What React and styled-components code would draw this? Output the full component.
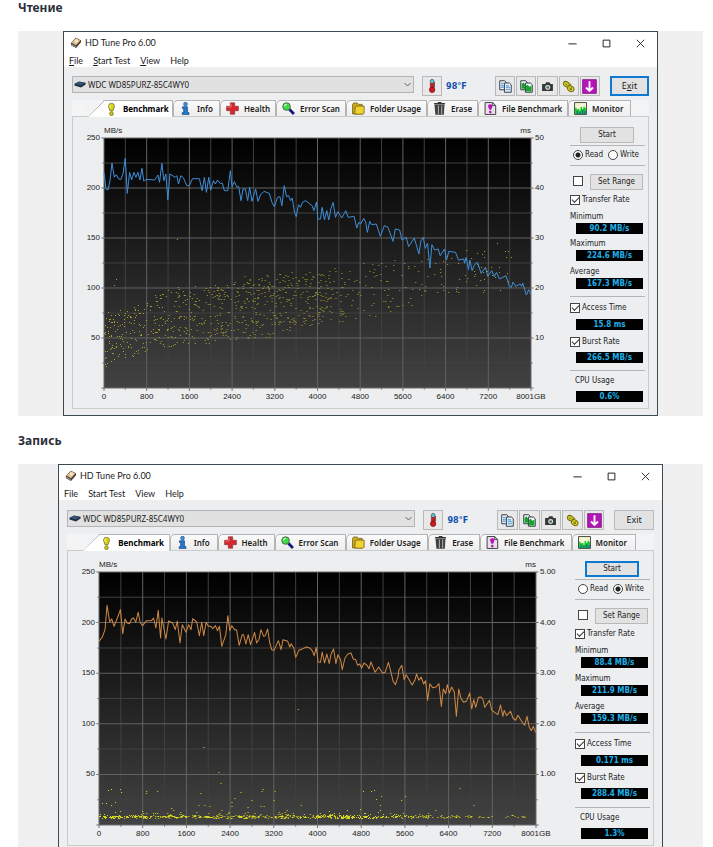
import React, { useId, useState } from 'react';
import styled, { createGlobalStyle, css } from 'styled-components';

const UI_FONT = '"Noto Sans", "Open Sans", sans-serif';
const TITLE_FONT = 'Lato, "Noto Sans", sans-serif';
const PANEL_FONT = '"DejaVu Sans Condensed", "DejaVu Sans", sans-serif';
const AXIS_FONT = '"Liberation Sans", Arial, sans-serif';

const GlobalStyle = createGlobalStyle`
  * {
    box-sizing: border-box;
  }

  html {
    scrollbar-width: none;
  }

  body {
    margin: 0;
    background: #fff;
    font-family: ${UI_FONT};
    color: #1b1b1b;
  }

  button, select, input {
    margin: 0;
    font: inherit;
    color: inherit;
  }
`;

const Article = styled.article`
  padding: 0 10px 0 18px;
`;

const Heading = styled.h2`
  margin: 0 0 15px;
  font-size: 12px;
  line-height: 16px;
  font-weight: 700;
  color: #2b2f3a;
`;

const Figure = styled.figure`
  margin: 0 0 17px;
  padding: 0 ${props => props.$inset}px;
  background: #f0f0f0;
`;

const Window = styled.section`
  border: 1px solid #3c4a54;
  background: #eceef0;
`;

const TitleBar = styled.header`
  display: flex;
  align-items: center;
  height: 22px;
  padding: 0 4px 0 6px;
  background: #fff;
`;

const Title = styled.h3`
  flex: 1;
  margin: 0 0 0 3px;
  font-family: ${TITLE_FONT};
  font-size: 9px;
  line-height: 12px;
  font-weight: 400;
`;

const WindowButton = styled.button`
  display: flex;
  align-items: center;
  justify-content: center;
  width: 26px;
  height: 20px;
  margin-left: 8px;
  padding: 0;
  border: 0;
  background: none;
`;

const Menu = styled.nav`
  display: flex;
  align-items: center;
  gap: 10px;
  height: 13px;
  padding: 0 5px;
  background: #fff;
`;

const MenuLink = styled.a`
  font-family: ${TITLE_FONT};
  font-size: 9px;
  line-height: 13px;
  color: inherit;
  text-decoration: none;
`;

const Content = styled.div`
  padding: ${props => props.$top}px 8px 6px;
`;

const Toolbar = styled.div`
  display: grid;
  grid-template-columns: 350fr 24fr 49fr 115fr 39fr;
  height: 20px;
  margin-bottom: 4px;
`;

const DriveField = styled.label`
  position: relative;
  height: 17px;
  margin-right: 8px;

  svg {
    position: absolute;
    top: 5px;
    left: 2px;
    pointer-events: none;
  }

  svg + svg {
    left: auto;
    right: 3px;
  }
`;

const DriveSelect = styled.select`
  display: block;
  width: 100%;
  height: 17px;
  padding: 0 14px 0 15px;
  border: 1px solid #b4b4b4;
  border-radius: 0;
  background: #e1e1e1;
  font-size: 8px;
  appearance: none;
`;

const buttonFace = css`
  display: flex;
  align-items: center;
  justify-content: center;
  padding: 0;
  border: 1px solid #b9b9b9;
  background: #e2e2e2;
  font-size: 9px;
  line-height: 12px;
`;

const focusFace = css`
  border: 2px solid #0f78d0;
`;

const IconButton = styled.button`
  ${buttonFace}
  height: 20px;
  background: #e8e8e8;
`;

const IconGroup = styled.div`
  display: grid;
  grid-template-columns: repeat(5, 1fr);
  gap: 1px;
  margin-right: 10px;
`;

const Temperature = styled.span`
  font-family: ${PANEL_FONT};
  font-size: 9px;
  line-height: 20px;
  font-weight: 700;
  color: #1250b0;
`;

const ThermoButton = styled(IconButton)`
  margin-right: 4px;
`;

const ExitButton = styled.button`
  ${buttonFace}
  height: 20px;
  ${props => (props.$focused ? focusFace : null)}
`;

const Tabs = styled.div`
  display: grid;
  grid-template-columns:
    minmax(0, 16fr) minmax(0, 85fr) minmax(0, 47fr) minmax(0, 56fr)
    minmax(0, 70fr) minmax(0, 81fr) minmax(0, 51fr) minmax(0, 90fr)
    minmax(0, 63fr) minmax(0, 18fr);
  height: 16px;
  background: #f1f3f4;
`;

const TabStub = styled.span`
  height: 11px;
  margin: 3px 4px 0 0;
  background: #f4f4f4;
`;

const Tab = styled.button`
  display: flex;
  align-items: center;
  gap: 5px;
  padding: 0 0 0 5px;
  border: solid #b4b4b4;
  border-width: 1px 1px 0;
  border-top-left-radius: 5px;
  background: linear-gradient(#fafafa, #ededed);
  font-size: 8px;
  line-height: 12px;
  font-weight: 600;
  white-space: nowrap;
`;

const ActiveTab = styled(Tab)`
  position: relative;
  margin-bottom: -1px;
  padding-left: 17px;
  border-left: 0;
  background: #fff;
  clip-path: polygon(0 100%, 16px 0, 100% 0, 100% 100%);
  font-weight: 700;
  color: #000;

  > svg {
    position: absolute;
    left: 0;
    top: -1px;
  }
`;

const TabIcon = styled.span`
  display: flex;
  justify-content: center;
  flex: 0 0 13px;
`;

const Panel = styled.div`
  display: grid;
  grid-template-columns: minmax(0, 1fr) 75px;
  column-gap: 8px;
  padding-right: 3px;
  border: 1px solid #c9cccd;
`;

const ChartGrid = styled.div`
  display: grid;
  grid-template-columns: 31px minmax(0, 1fr) 31px;
  grid-template-rows: 21px ${props => props.$height}px 20px;
  font-family: ${AXIS_FONT};
  font-size: 8px;
  line-height: 10px;
  color: #222;
`;

const Units = styled.div`
  grid-column: 2;
  display: flex;
  justify-content: space-between;
  align-items: flex-end;
  padding-bottom: 2px;
`;

const AxisLabels = styled.div`
  grid-row: 2;
  grid-column: ${props => (props.$right ? 3 : 1)};
  display: flex;
  flex-direction: column;
  justify-content: space-between;
  margin: -5px 0;
  padding: ${props => (props.$right ? '0 0 0 4px' : '0 4px 0 0')};
  text-align: ${props => (props.$right ? 'left' : 'right')};

  span {
    height: 10px;
  }
`;

const Plot = styled.svg`
  grid-row: 2;
  grid-column: 2;
  display: block;
  width: 100%;
  height: 100%;
  overflow: visible;
`;

const GbLabels = styled.div`
  grid-row: 3;
  grid-column: 2;
  display: flex;
  justify-content: space-between;
  padding-top: 4px;

  span {
    display: flex;
    justify-content: center;
    width: 0;
  }
`;

const Side = styled.form`
  display: flex;
  flex-direction: column;
  justify-content: space-between;
  padding: 10px 0 6px;
  font-family: ${PANEL_FONT};
  font-size: 8px;
  line-height: 10px;
`;

const StartButton = styled.button`
  ${buttonFace}
  width: 54px;
  height: 16px;
  margin: 0 0 2px 10px;
  font-size: 8px;
  ${props => (props.$focused ? focusFace : null)}
`;

const RangeRow = styled.div`
  display: flex;
  justify-content: space-between;
  margin: 8px 0 4px;
  padding: 0 2px 0 3px;

  input {
    margin-top: 2px;
  }
`;

const RangeButton = styled.button`
  ${buttonFace}
  width: 53px;
  height: 16px;
  font-size: 8px;
`;

const Rule = styled.hr`
  width: 100%;
  height: 1px;
  margin: 0;
  border: 0;
  background: #b4b4b4;
`;

const Radios = styled.div`
  display: flex;
  gap: 5px;
  height: 12px;
  margin: 3px 0 4px;
  padding-left: 3px;
`;

const Choice = styled.label`
  display: flex;
  align-items: center;
  gap: 2px;
  height: 12px;
  white-space: nowrap;
`;

const Radio = styled.input`
  width: 10px;
  height: 10px;
  border: 1px solid #444;
  border-radius: 50%;
  background: #fff;
  appearance: none;

  &:checked {
    background: radial-gradient(circle, #222 0 2px, #fff 3px);
  }
`;

const CheckBox = styled.input`
  width: 10px;
  height: 10px;
  border: 1px solid #444;
  background: #fff;
  appearance: none;

  &:checked::after {
    content: '';
    display: block;
    width: 6px;
    height: 3px;
    margin: 1px;
    border: solid #333;
    border-width: 0 0 1px 1px;
    transform: rotate(-45deg);
  }
`;

const ReadingBlock = styled.div`
  display: flex;
  flex-direction: column;
  gap: ${props => props.$gap || 1}px;
  padding-top: ${props => (props.$ruled ? 2 : 0)}px;
`;

const ReadingName = styled.span`
  padding-left: ${props => props.$indent || 0}px;
`;

const ReadingValue = styled.output`
  display: block;
  height: 11px;
  margin: 0 2px 0 6px;
  background: #000;
  font-family: ${PANEL_FONT};
  font-size: 8px;
  line-height: 11px;
  font-weight: 700;
  text-align: center;
  color: #1fb0e8;
`;

const Icon = ({ size = 12, children }) => (
  <svg width={size} height={size} viewBox="0 0 12 12" fill="none" aria-hidden="true">
    {children}
  </svg>
);

const BenchmarkIcon = () => (
  <Icon size={13}>
    <path d="M6 0.4C8.2 0.4 9 1.8 8.6 3.6L7.3 7.3H4.7L3.4 3.6C3 1.8 3.8 0.4 6 0.4Z" fill="#d6d21a" stroke="#6b6a12" strokeWidth="0.7" />
    <path d="M5 1.6C4.3 2.2 4.5 3.4 5 4.6" stroke="#fbfaa8" strokeWidth="0.9" />
    <circle cx="6" cy="9.9" r="1.7" fill="#d0cb18" stroke="#6b6a12" strokeWidth="0.7" />
  </Icon>
);

const InfoIcon = () => (
  <Icon size={13}>
    <circle cx="6" cy="1.9" r="1.7" fill="#3c9be8" stroke="#16406e" strokeWidth="0.6" />
    <path d="M3.2 4.4H7.8V9.8H9.2V11.6H3V9.8H4.3V6H3.2Z" fill="#1f7ad6" stroke="#16406e" strokeWidth="0.6" />
  </Icon>
);

const HealthIcon = () => (
  <Icon size={13}>
    <path d="M4 0.8H8V4H11.4V8H8V11.2H4V8H0.6V4H4Z" fill="#d8262c" stroke="#8d3a3c" strokeWidth="0.7" />
    <path d="M4.7 1.6V4.7H1.4" stroke="#f17a7d" strokeWidth="0.8" />
  </Icon>
);

const ScanIcon = () => (
  <Icon size={13}>
    <path d="M6.8 6.8L11 11" stroke="#10187c" strokeWidth="2.6" />
    <circle cx="4.2" cy="4.2" r="3.5" fill="#3ddc45" stroke="#4a6650" strokeWidth="0.9" />
    <path d="M2.3 4C2.4 2.8 3.2 2.2 4.4 2.2" stroke="#d2ffd2" strokeWidth="1.1" />
  </Icon>
);

const FolderIcon = () => (
  <Icon size={13}>
    <path d="M0.5 11V2.2L1.6 0.9H4.8L6 2.2H9.4V11Z" fill="#c9a81b" stroke="#6b5a12" strokeWidth="0.7" />
    <path d="M2.6 11L3 4.6L4.2 3.8H11.2V10.2L10.3 11.2H2.6Z" fill="#f0d230" stroke="#6b5a12" strokeWidth="0.7" />
  </Icon>
);

const EraseIcon = () => (
  <Icon size={13}>
    <path d="M1 1.6H11M4.4 0.6H7.8" stroke="#333" strokeWidth="1.3" />
    <path d="M1.4 2.6H10.6L10 11.7H2.2Z" fill="#404040" />
    <path d="M5 3.2V11.2M8 3.2V11.2" stroke="#a9a9a9" strokeWidth="1" />
  </Icon>
);

const FileBenchIcon = () => (
  <Icon size={13}>
    <path d="M1 0.5H8L10.8 3.2V11.5H1Z" fill="#e4e4e8" stroke="#3f3f44" strokeWidth="0.9" />
    <path d="M8 0.5V3.2H10.8" stroke="#3f3f44" strokeWidth="0.8" />
    <path d="M5.8 2C7.6 2 8.2 3 7.7 4.4L6.6 7.2H5L3.9 4.4C3.4 3 4 2 5.8 2Z" fill="#b912b5" />
    <circle cx="5.8" cy="9.3" r="1.2" fill="#b912b5" />
  </Icon>
);

const MonitorIcon = () => (
  <Icon size={13}>
    <path d="M0.5 0.5H11.5V11.5H0.5Z" fill="#f4f6d2" stroke="#2f352f" strokeWidth="0.8" />
    <path d="M1 11V5.4H2.4V7H3.6V6.4H5V8H6V4.6H7.4V6.4H8.6V4.4H10V5.6H11V11Z" fill="#14c42c" />
    <path d="M2.8 11V8.6M5.5 11V9M8 11V7.6M10.2 11V8.4" stroke="#1749c9" strokeWidth="0.9" />
  </Icon>
);

const HdTuneIcon = () => (
  <Icon size={12}>
    <path d="M0.8 6.2L5.8 0.8L11 3.2L11 5.2L6 11L1 8.2Z" fill="#4a3c30" />
    <path d="M1.6 5.8L6 1.2L10.4 3.4L6 8.2Z" fill="#e0bd8c" />
    <circle cx="6.4" cy="4" r="1.8" fill="#f6e6cb" />
    <path d="M1.2 6.6L5.8 9.2V10.5L1.2 8Z" fill="#8a8f98" />
  </Icon>
);

const DriveIcon = () => (
  <svg width="12" height="7" viewBox="0 0 12 7" aria-hidden="true">
    <path d="M0.5 2.8L5 0.6L11.6 1.8V3.4L7 6.6L0.5 4.6Z" fill="#1f3047" />
    <path d="M1.2 2.8L5.2 1L10.6 2L6.8 4.4Z" fill="#35557a" />
  </svg>
);

const ChevronIcon = () => (
  <svg width="7" height="7" viewBox="0 0 7 7" fill="none" aria-hidden="true">
    <path d="M0.5 2L3.5 5L6.5 2" stroke="#555" strokeWidth="0.9" />
  </svg>
);

const ThermoIcon = () => (
  <Icon size={14}>
    <path d="M4.6 1.4C4.6 0 7.6 0 7.6 1.4V7.4H4.6Z" fill="#5cc4ce" stroke="#3a4a50" strokeWidth="0.6" />
    <path d="M4.6 3.4H7.6V8H4.6Z" fill="#d5161c" />
    <circle cx="6.1" cy="9.3" r="2.3" fill="#d5161c" stroke="#6b1013" strokeWidth="0.6" />
    <path d="M8 2.4V7.4" stroke="#333" strokeWidth="0.7" />
  </Icon>
);

const CopyIcon = ({ picture }) => (
  <Icon size={13}>
    <path d="M0.7 0.7H5.2L6.6 2V9H0.7Z" fill="#f5f8fb" stroke="#2e3a48" strokeWidth="0.9" />
    <path d="M5 2.8H9.6L11.3 4.4V11.3H5Z" fill="#f5f8fb" stroke="#2e3a48" strokeWidth="0.9" />
    {picture ? (
      <path d="M1.4 8V3.4L3.2 2.4L4.6 4V8ZM5.6 10.6V5.4L7.2 4.4L8.6 6.2L10.6 5.2V10.6Z" fill="#17a32b" />
    ) : (
      <path d="M1.8 3H4.4M1.8 4.8H4.4M1.8 6.6H4.4M6.2 5.4H9.4M6.2 7.2H10.2M6.2 9H10.2" stroke="#3f92dc" strokeWidth="1" />
    )}
  </Icon>
);

const CameraIcon = () => (
  <Icon size={13}>
    <path d="M1 3.8H3.8L4.8 2H7.8L8.8 3.8H11V10.2H1Z" fill="#36393b" />
    <circle cx="6.2" cy="6.9" r="2.3" fill="#dfe5e3" />
    <circle cx="6.2" cy="6.9" r="1.2" fill="#4c6a58" />
  </Icon>
);

const OptionsIcon = () => (
  <Icon size={13}>
    <ellipse cx="4" cy="3.8" rx="2.9" ry="2.3" transform="rotate(35 4 3.8)" fill="#d6cf1f" stroke="#6e6a14" strokeWidth="0.9" />
    <ellipse cx="8" cy="8" rx="3.2" ry="2.5" transform="rotate(35 8 8)" fill="#d6cf1f" stroke="#6e6a14" strokeWidth="0.9" />
    <path d="M3 3.4L5 4.8M6.8 7.2L9.2 9M8.8 6.8L7.4 9.2" stroke="#6e6a14" strokeWidth="0.9" />
    <path d="M6.6 3.2L8.4 4.4" stroke="#9b951a" strokeWidth="1.3" />
  </Icon>
);

const SaveIcon = () => (
  <Icon size={15}>
    <path d="M0.5 0.5H11.5V11.5H0.5Z" fill="#b514b8" stroke="#7a0d7d" strokeWidth="0.6" />
    <path d="M6 1.8V9.4M3.2 6.8L6 9.6L8.8 6.8" stroke="#fff" strokeWidth="1.5" />
  </Icon>
);

const TABS = [
  { name: 'Info', icon: InfoIcon },
  { name: 'Health', icon: HealthIcon },
  { name: 'Error Scan', icon: ScanIcon },
  { name: 'Folder Usage', icon: FolderIcon },
  { name: 'Erase', icon: EraseIcon },
  { name: 'File Benchmark', icon: FileBenchIcon },
  { name: 'Monitor', icon: MonitorIcon },
];

const READ_LINE =
  '0,103 6,153 12,156 18,128 24,75 31,118 37,110 44,123 51,124 57,108 64,60 70,166 77,103 83,126 90,103 96,118 102,103 108,126 114,91 120,130 126,124 152,126 159,116 162,111 167,133 174,76 180,128 186,108 192,186 198,108 214,118 219,113 224,138 231,113 239,120 249,143 257,143 266,122 287,122 295,158 302,118 308,163 315,118 321,156 329,128 335,138 341,126 349,136 356,136 362,158 372,158 380,98 385,146 392,131 399,146 405,146 412,188 418,153 425,153 432,188 438,148 445,190 456,153 463,190 471,170 481,160 497,166 505,193 512,206 522,178 529,176 535,203 542,143 549,176 555,173 561,188 566,180 573,223 578,236 585,200 591,208 597,193 606,188 617,196 626,203 631,218 639,192 643,243 651,243 656,208 663,246 670,218 676,246 682,213 689,193 696,238 703,221 715,240 727,218 734,238 752,235 760,270 766,253 772,258 781,241 787,253 792,283 799,250 805,260 819,258 831,295 843,263 854,268 869,310 876,273 889,276 896,306 909,298 916,326 933,300 947,348 953,308 960,298 966,331 973,316 980,390 986,320 994,336 1005,333 1011,353 1024,333 1030,366 1037,340 1057,343 1066,366 1082,363 1084,376 1089,358 1096,395 1100,366 1107,398 1114,380 1123,373 1134,406 1147,388 1154,415 1166,398 1174,416 1180,403 1189,423 1209,413 1219,446 1225,448 1230,432 1238,445 1251,438 1256,445 1259,435 1270,471 1277,455 1284,470';

const WRITE_LINE =
  '0,208 10,195 18,173 24,100 32,150 38,141 45,163 55,138 64,113 71,185 78,141 84,153 91,155 98,140 103,138 110,150 117,121 123,151 130,161 142,146 157,146 163,138 170,168 177,115 184,198 188,138 200,201 208,147 220,153 228,173 234,147 242,213 249,158 260,181 268,158 275,173 280,140 292,150 300,191 307,151 313,191 320,151 327,163 334,163 340,170 348,161 354,176 360,163 367,223 379,188 385,131 391,176 397,161 405,173 411,173 419,220 428,188 432,188 439,216 446,188 453,218 465,181 471,213 478,203 484,173 492,193 497,191 504,171 510,211 516,233 523,235 536,206 544,233 550,203 564,208 570,225 574,215 582,228 588,256 597,235 609,230 620,225 630,228 637,236 643,251 649,226 655,270 662,271 667,240 674,273 681,246 688,275 694,245 701,231 708,275 714,248 722,263 727,293 735,258 744,246 753,243 760,261 767,263 773,280 779,276 785,288 792,273 802,281 807,290 813,270 825,301 836,285 847,303 855,301 865,271 872,298 879,328 886,338 894,313 896,295 905,280 912,323 918,308 936,339 944,325 949,306 956,325 963,315 970,336 976,326 982,385 989,335 997,347 1007,345 1016,335 1023,403 1029,351 1036,365 1041,338 1047,363 1054,345 1062,361 1068,433 1075,351 1082,380 1090,391 1098,388 1108,363 1114,411 1120,383 1126,406 1134,376 1142,375 1147,381 1153,406 1167,385 1174,415 1192,428 1200,399 1207,433 1211,415 1218,431 1230,418 1237,438 1245,445 1252,430 1262,446 1272,460 1279,433 1286,466 1292,476 1298,463 1305,481';

// Small seeded generator, so the access time dots stay put between renders.
const seeded = seed => () => {
  seed = (seed * 1664525 + 1013904223) % 4294967296;
  return seed / 4294967296;
};

const between = (stops, x) => {
  const i = Math.max(1, stops.findIndex(stop => stop[0] >= x));
  const [x0, y0] = stops[i - 1];
  const [x1, y1] = stops[i];
  return y0 + ((y1 - y0) * (x - x0)) / (x1 - x0);
};

const snap = value => Math.floor(value / 3) * 3;

const READ_TOP = [[0, 525], [100, 500], [200, 450], [380, 435], [640, 390], [900, 360], [1290, 330]];
const READ_BOTTOM = [[0, 690], [100, 650], [200, 628], [380, 610], [500, 600], [640, 560], [800, 545], [900, 515], [1000, 470], [1290, 460]];

const readDots = () => {
  const random = seeded(17);
  const dots = [[219, 303], [36, 423], [30, 441], [1184, 315], [1143, 339], [1209, 359], [1224, 359], [1090, 336], [425, 414], [490, 412]];
  for (let i = 0; i < 840; i += 1) {
    const r = random();
    const x = r < 0.77 ? random() * 650 : 650 + random() ** 1.6 * 570;
    const top = between(READ_TOP, x);
    dots.push([x, top + random() * (between(READ_BOTTOM, x) - top)]);
  }
  return dots;
};

const writeDots = () => {
  const random = seeded(5);
  const dots = [
    [594, 411], [312, 525], [357, 600], [365, 633], [28, 656], [36, 652], [63, 651], [66, 662], [143, 658],
    [143, 663], [175, 658], [304, 663], [423, 660], [486, 657], [490, 651], [525, 658], [405, 678], [456, 684],
    [10, 694], [22, 694], [36, 700], [49, 692], [298, 699], [315, 700], [330, 702], [396, 690], [398, 702],
    [446, 705], [484, 702], [494, 702], [522, 684], [562, 714], [603, 699], [216, 708], [224, 714], [63, 717],
    [789, 657], [814, 658], [822, 654], [828, 681], [843, 674], [842, 699], [903, 684], [915, 672], [1078, 649],
    [1119, 701], [1005, 716], [688, 718], [741, 716], [780, 711], [842, 716], [130, 717], [244, 720], [366, 714],
  ];
  for (let i = 0; i < 620; i += 1) {
    const x = random() < 0.72 ? random() * 740 : 740 + random() ** 1.7 * 540;
    dots.push([x, 731 + random() * 8]);
  }
  for (let i = 0; i < 60; i += 1) {
    dots.push([random() * 1000, 722 + random() * 8]);
  }
  return dots;
};

const dotPath = dots => dots.map(([x, y]) => `M${snap(x)} ${snap(y) + 1.5}h3`).join('');

const GB_TICKS = ['0', '800', '1600', '2400', '3200', '4000', '4800', '5600', '6400', '7200', '8001GB'];

const BENCHMARKS = {
  read: {
    size: [1284, 750],
    plotHeight: 250,
    line: READ_LINE,
    lineColor: '#3f8fd8',
    dots: dotPath(readDots()),
    dotColor: '#a8a82a',
    speed: ['250', '200', '150', '100', '50', ''],
    latency: ['50', '40', '30', '20', '10', ''],
    rates: [['Minimum', '90.2 MB/s'], ['Maximum', '224.6 MB/s'], ['Average', '167.3 MB/s']],
    accessTime: '15.8 ms',
    burstRate: '266.5 MB/s',
    cpu: '0.6%',
  },
  write: {
    size: [1306, 759],
    plotHeight: 253,
    line: WRITE_LINE,
    lineColor: '#d08a45',
    dots: dotPath(writeDots()),
    dotColor: '#d8d81c',
    speed: ['250', '200', '150', '100', '50', ''],
    latency: ['5.00', '4.00', '3.00', '2.00', '1.00', ''],
    rates: [['Minimum', '88.4 MB/s'], ['Maximum', '211.9 MB/s'], ['Average', '159.3 MB/s']],
    accessTime: '0.171 ms',
    burstRate: '288.4 MB/s',
    cpu: '1.3%',
  },
};

const gridLines = (count, remainder) =>
  Array.from({ length: count - 1 }, (_, i) => i + 1).filter(i => i % 2 === remainder);

const Chart = ({ data }) => {
  const gradient = useId();
  const [w, h] = data.size;
  const lines = remainder =>
    gridLines(20, remainder).map(i => `M${(w * i) / 20} 0V${h}`).join('') +
    gridLines(10, remainder).map(i => `M0 ${(h * i) / 10}H${w}`).join('');
  const ticks =
    Array.from({ length: 21 }, (_, i) => `M${(w * i) / 20} ${h}v${i % 2 ? 5 : 9}`).join('') +
    Array.from({ length: 11 }, (_, i) => {
      const reach = i % 2 ? 5 : 8;
      return `M${-reach} ${(h * i) / 10}h${reach}M${w} ${(h * i) / 10}h${reach}`;
    }).join('');

  return (
    <ChartGrid $height={data.plotHeight}>
      <Units>
        <span>MB/s</span>
        <span>ms</span>
      </Units>
      <AxisLabels>
        {data.speed.map((label, i) => <span key={i}>{label}</span>)}
      </AxisLabels>
      <Plot viewBox={`0 0 ${w} ${h}`} preserveAspectRatio="none" role="img" aria-label="Benchmark">
        <defs>
          <linearGradient id={gradient} x1="0" y1="0" x2="0" y2="1">
            <stop offset="0" stopColor="#000" />
            <stop offset="1" stopColor="#424242" />
          </linearGradient>
        </defs>
        <rect width={w} height={h} fill={`url(#${gradient})`} />
        <path d={lines(1)} stroke="#404040" strokeWidth="3" />
        <path d={lines(0)} stroke="#626262" strokeWidth="3" />
        <path d={ticks} stroke="#777" strokeWidth="3" />
        <path d={`M0 0H${w}V${h}H0Z`} fill="none" stroke="#6a6a6a" strokeWidth="3" />
        <path d={data.dots} stroke={data.dotColor} strokeWidth="3" />
        <polyline points={data.line} fill="none" stroke={data.lineColor} strokeWidth="3" strokeLinejoin="round" />
      </Plot>
      <AxisLabels $right>
        {data.latency.map((label, i) => <span key={i}>{label}</span>)}
      </AxisLabels>
      <GbLabels>
        {GB_TICKS.map(label => <span key={label}>{label}</span>)}
      </GbLabels>
    </ChartGrid>
  );
};

const Controls = ({ mode, data, startFocused }) => {
  const [current, setCurrent] = useState(mode);

  return (
    <Side onSubmit={event => event.preventDefault()}>
      <div>
        <StartButton $focused={startFocused}>Start</StartButton>
        <Rule />
        <Radios>
          <Choice>
            <Radio type="radio" name={`mode-${mode}`} checked={current === 'read'} onChange={() => setCurrent('read')} />
            Read
          </Choice>
          <Choice>
            <Radio type="radio" name={`mode-${mode}`} checked={current === 'write'} onChange={() => setCurrent('write')} />
            Write
          </Choice>
        </Radios>
        <Rule />
        <RangeRow>
          <CheckBox type="checkbox" aria-label="Set Range" />
          <RangeButton type="button">Set Range</RangeButton>
        </RangeRow>
        <Choice>
          <CheckBox type="checkbox" defaultChecked />
          Transfer Rate
        </Choice>
      </div>
      {data.rates.map(([name, value]) => (
        <ReadingBlock key={name}>
          <ReadingName>{name}</ReadingName>
          <ReadingValue>{value}</ReadingValue>
        </ReadingBlock>
      ))}
      <ReadingBlock $gap={5} $ruled>
        <Rule />
        <Choice>
          <CheckBox type="checkbox" defaultChecked />
          Access Time
        </Choice>
        <ReadingValue>{data.accessTime}</ReadingValue>
      </ReadingBlock>
      <ReadingBlock $gap={4}>
        <Choice>
          <CheckBox type="checkbox" defaultChecked />
          Burst Rate
        </Choice>
        <ReadingValue>{data.burstRate}</ReadingValue>
      </ReadingBlock>
      <ReadingBlock $gap={5} $ruled>
        <Rule />
        <ReadingName $indent={5}>CPU Usage</ReadingName>
        <ReadingValue>{data.cpu}</ReadingValue>
      </ReadingBlock>
    </Side>
  );
};

const HdTuneWindow = ({ mode, contentTop, underlined }) => {
  const data = BENCHMARKS[mode];
  const Key = underlined ? 'u' : 'span';

  return (
    <Window>
      <TitleBar>
        <HdTuneIcon />
        <Title>HD Tune Pro 6.00</Title>
        <WindowButton aria-label="Minimize">
          <Icon size={9}><path d="M0.5 6.5H11.5" stroke="#222" strokeWidth="1.3" /></Icon>
        </WindowButton>
        <WindowButton aria-label="Maximize">
          <Icon size={9}><path d="M1.5 1.5H10.5V10.5H1.5Z" stroke="#222" strokeWidth="1.3" /></Icon>
        </WindowButton>
        <WindowButton aria-label="Close">
          <Icon size={9}><path d="M1 1L11 11M11 1L1 11" stroke="#222" strokeWidth="1.2" /></Icon>
        </WindowButton>
      </TitleBar>
      <Menu>
        <MenuLink href="#file"><Key>F</Key>ile</MenuLink>
        <MenuLink href="#start"><Key>S</Key>tart Test</MenuLink>
        <MenuLink href="#view"><Key>V</Key>iew</MenuLink>
        <MenuLink href="#help">Help</MenuLink>
      </Menu>
      <Content $top={contentTop}>
        <Toolbar>
          <DriveField>
            <DriveSelect aria-label="Drive">
              <option>WDC WD85PURZ-85C4WY0</option>
            </DriveSelect>
            <DriveIcon />
            <ChevronIcon />
          </DriveField>
          <ThermoButton aria-label="Temperature"><ThermoIcon /></ThermoButton>
          <Temperature>98°F</Temperature>
          <IconGroup>
            <IconButton aria-label="Copy text"><CopyIcon /></IconButton>
            <IconButton aria-label="Copy picture"><CopyIcon picture /></IconButton>
            <IconButton aria-label="Screenshot"><CameraIcon /></IconButton>
            <IconButton aria-label="Options"><OptionsIcon /></IconButton>
            <IconButton aria-label="Save"><SaveIcon /></IconButton>
          </IconGroup>
          <ExitButton $focused={underlined}><span>E<Key>x</Key>it</span></ExitButton>
        </Toolbar>
        <Tabs role="tablist">
          <TabStub />
          <ActiveTab role="tab" aria-selected="true">
            <svg width="17" height="17" viewBox="0 0 17 17" fill="none" aria-hidden="true">
              <path d="M0.5 16.5L16.5 0.5" stroke="#b4b4b4" />
            </svg>
            <TabIcon><BenchmarkIcon /></TabIcon>
            Benchmark
          </ActiveTab>
          {TABS.map(({ name, icon: TabGlyph }) => (
            <Tab key={name} role="tab" aria-selected="false">
              <TabIcon><TabGlyph /></TabIcon>
              {name}
            </Tab>
          ))}
        </Tabs>
        <Panel>
          <Chart data={data} />
          <Controls mode={mode} data={data} startFocused={!underlined} />
        </Panel>
      </Content>
    </Window>
  );
};

const App = () => (
  <>
    <GlobalStyle />
    <Article>
      <Heading>Чтение</Heading>
      <Figure $inset={45}>
        <HdTuneWindow mode="read" contentTop={9} underlined />
      </Figure>
      <Heading>Запись</Heading>
      <Figure $inset={40}>
        <HdTuneWindow mode="write" contentTop={10} />
      </Figure>
    </Article>
  </>
);

export default App;
